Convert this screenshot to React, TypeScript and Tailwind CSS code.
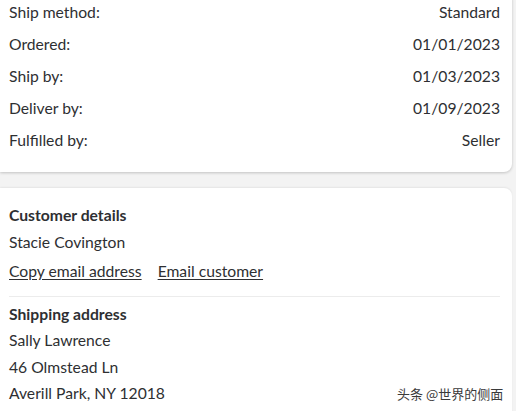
import React from 'react';

const rows = [
  { label: 'Ship method:', value: 'Standard' },
  { label: 'Ordered:', value: '01/01/2023' },
  { label: 'Ship by:', value: '01/03/2023' },
  { label: 'Deliver by:', value: '01/09/2023' },
  { label: 'Fulfilled by:', value: 'Seller' },
];

export default function App() {
  return (
    <div className="relative w-[516px] h-[411px] overflow-hidden bg-[#f3f3f3] text-[15.7px] text-[#2e2f32] font-['Lato',sans-serif]">
      <section className="w-[512px] bg-white rounded-br-lg shadow-[0_1px_3px_rgba(0,0,0,0.2)] pl-[9px] pr-[12px] pb-[15px] -mt-[3px]">
        {rows.map((r) => (
          <div key={r.label} className="flex justify-between items-center h-8">
            <span>{r.label}</span>
            <span>{r.value}</span>
          </div>
        ))}
      </section>

      <section className="mt-[16px] w-[512px] bg-white rounded-tr-lg shadow-[0_-1px_2px_rgba(0,0,0,0.06)] pl-[9px] pr-[12px] pt-[15px] h-[240px]">
        <h3 className="font-bold leading-[24px]">Customer details</h3>
        <p className="leading-[30px]">Stacie Covington</p>
        <div className="flex gap-4 leading-[28px]">
          <button className="underline underline-offset-2">Copy email address</button>
          <button className="underline underline-offset-2">Email customer</button>
        </div>
        <div className="mt-[11px] border-t border-[#ececec]" />
        <h3 className="mt-[5px] font-bold leading-[24px]">Shipping address</h3>
        <p className="leading-[28px]">Sally Lawrence</p>
        <p className="leading-[26px]">46 Olmstead Ln</p>
        <p className="leading-[26px]">Averill Park, NY 12018</p>
      </section>

      <span className="absolute left-[397px] top-[384px] text-[13px] text-[#3a3a3a] font-['Noto_Sans_CJK_SC',sans-serif] [text-shadow:0_0_2px_#fff,0_0_2px_#fff]">
        头条 @世界的侧面
      </span>
    </div>
  );
}
